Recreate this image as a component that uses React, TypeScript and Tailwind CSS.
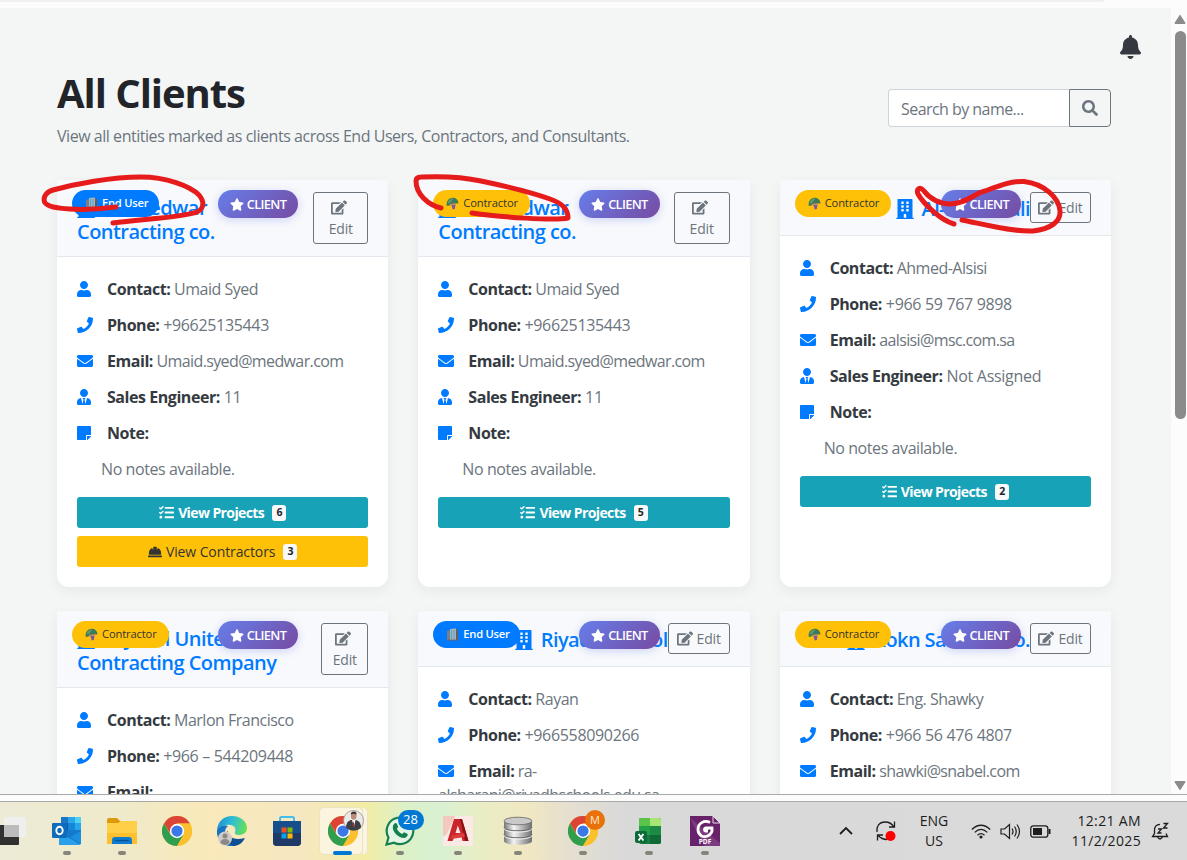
import React from "react";
import {
  FaBell,
  FaBuilding,
  FaEdit,
  FaEnvelope,
  FaHardHat,
  FaPhone,
  FaSearch,
  FaStar,
  FaStickyNote,
  FaTasks,
  FaUser,
  FaUserTie,
} from "react-icons/fa";

type Client = {
  kind: "End User" | "Contractor";
  lead: string;
  second?: string;
  editWidth: string;
  contact: string;
  phone: string;
  email: string;
  engineer: string;
  projects: number;
  contractors?: number;
};

const clients: Client[] = [
  { kind: "End User", lead: "Al- Medwar", second: "Contracting co.", editWidth: "w-[55px]", contact: "Umaid Syed", phone: "+96625135443", email: "Umaid.syed@medwar.com", engineer: "11", projects: 6, contractors: 3 },
  { kind: "Contractor", lead: "Al- Medwar", second: "Contracting co.", editWidth: "w-[56px]", contact: "Umaid Syed", phone: "+96625135443", email: "Umaid.syed@medwar.com", engineer: "11", projects: 5 },
  { kind: "Contractor", lead: "Al-Shamnali", editWidth: "w-[61px]", contact: "Ahmed-Alsisi", phone: "+966 59 767 9898", email: "aalsisi@msc.com.sa", engineer: "Not Assigned", projects: 2 },
  { kind: "Contractor", lead: "Al Jebel United", second: "Contracting Company", editWidth: "w-[47px]", contact: "Marlon Francisco", phone: "+966 – 544209448", email: "", engineer: "11", projects: 1 },
  { kind: "End User", lead: "Riyadh School", editWidth: "w-[62px]", contact: "Rayan", phone: "+966558090266", email: "ra-alsharani@riyadhschools.edu.sa", engineer: "11", projects: 1 },
  { kind: "Contractor", lead: "Rokn Sanabel Co.", editWidth: "w-[61px]", contact: "Eng. Shawky", phone: "+966 56 476 4807", email: "shawki@snabel.com", engineer: "11", projects: 1 },
];

function TowerGlyph() {
  return (
    <svg width="13" height="13" viewBox="0 0 13 13">
      <path d="M1 3l3-1v10H1z" fill="#7d7f86" />
      <path d="M4 1l6-.5V12H4z" fill="#a9b3bd" />
      <path d="M10 .5l2 1.500v10h-2z" fill="#6b5b57" />
      <path d="M5.500 2v9M8 2v9" stroke="#3fa9d8" strokeWidth="1" />
      <path d="M1 12h11" stroke="#77675f" strokeWidth="1" />
    </svg>
  );
}

function HelmetGlyph() {
  return (
    <svg width="13" height="13" viewBox="0 0 13 13">
      <path d="M5 5h5.500l-1 3.500-1 3.500H6.500L6 9.500 4.500 8z" fill="#c98a6a" />
      <path d="M5.500 8l1.300 4.500 2-.5.5-4z" fill="#7d5aa0" />
      <path d="M.8 9C0 4.500 2.500.8 6.500.8c3.400 0 5.700 2 6 5.600L9 6.200 5 6.800 3.500 8.500z" fill="#3f7a55" />
      <path d="M1.800 6C2.500 3 4.500 1.300 7.500 1.500L3.500 6.500z" fill="#5f9c70" />
    </svg>
  );
}

function KindBadge({ kind }: { kind: Client["kind"] }) {
  const endUser = kind === "End User";
  return (
    <span
      className={`absolute left-[15px] top-[10px] z-10 flex h-[27px] items-center gap-[4px] rounded-full pl-[13px] text-[11.2px] ${
        endUser ? "w-[87px] bg-[#007bff] font-semibold text-white tracking-[-0.25px]" : "w-[96.5px] bg-[#ffc107] font-medium text-[#333] tracking-[-0.15px]"
      }`}
    >
      {endUser ? <TowerGlyph /> : <HelmetGlyph />}
      <span>{kind}</span>
    </span>
  );
}

function InfoRow({ icon, label, value, tracking }: { icon: React.ReactNode; label: string; value: string; tracking: string }) {
  return (
    <p className={`mb-3 break-words text-[16px] leading-6 text-[#6c757d] ${tracking}`}>
      <span className="inline-block w-[30px] align-[-2px] tracking-normal text-[#007bff]">{icon}</span>
      <strong className="font-bold tracking-[-0.45px] text-[#343a40]">{label}:</strong> {value}
    </p>
  );
}

function ClientCard({ client }: { client: Client }) {
  const wrapped = Boolean(client.second);
  return (
    <article className="relative flex flex-col rounded-t-[4px] rounded-b-[12px] bg-white shadow-[0_4px_14px_rgba(0,0,0,0.06)]">
      <KindBadge kind={client.kind} />
      <span className="absolute right-[90px] top-[10px] z-10 flex h-[28px] w-[80.5px] items-center gap-[3px] rounded-full bg-[linear-gradient(135deg,#667eea,#764ba2)] pl-[12px] pt-[1px] text-[12.8px] font-semibold tracking-[-0.65px] text-white shadow-[0_2px_8px_rgba(102,126,234,0.3)]">
        <FaStar className="h-[13px] w-[14px]" />
        CLIENT
      </span>
      <header className="flex items-center justify-between rounded-t-[4px] border-b border-[#e3e8ee] bg-[#f8f9fc] px-5 py-3">
        <h5
          className={`flex-1 whitespace-nowrap text-[20px] font-semibold leading-6 text-[#007bff] ${
            wrapped ? "pt-[3px] tracking-[-0.54px]" : "pt-[2px] text-right tracking-[-0.6px]"
          }`}
        >
          <FaBuilding className="mr-[8px] inline-block h-[20px] w-[18px] align-[-3px]" />
          {client.lead}
          {wrapped && <span className="block">{client.second}</span>}
        </h5>
        <button
          className={`flex shrink-0 items-center justify-center rounded-[3px] border border-[#6c757d] text-[14px] leading-[21px] tracking-[-0.2px] text-[#6c757d] ${client.editWidth} ${
            wrapped ? "h-[52px] flex-col" : "h-[31px] gap-[4px]"
          }`}
        >
          <span className={wrapped ? "flex h-[21px] items-center pr-[3px]" : "flex"}>
            <FaEdit className="h-[15px] w-[16px]" />
          </span>
          <span>Edit</span>
        </button>
      </header>
      <div className="p-5">
        <InfoRow icon={<FaUser className="h-4 w-[14px]" />} label="Contact" value={client.contact} tracking="tracking-[-0.5px]" />
        <InfoRow icon={<FaPhone className="h-4 w-4" />} label="Phone" value={client.phone} tracking="tracking-[-0.33px]" />
        <InfoRow icon={<FaEnvelope className="h-4 w-4" />} label="Email" value={client.email} tracking="tracking-[-0.62px]" />
        <InfoRow icon={<FaUserTie className="h-4 w-[14px]" />} label="Sales Engineer" value={client.engineer} tracking="tracking-[-0.28px]" />
        <InfoRow icon={<FaStickyNote className="h-4 w-[14px]" />} label="Note" value="" tracking="tracking-normal" />
        <p className="mb-4 pl-6 text-[16px] leading-6 tracking-[-0.42px] text-[#6c757d]">No notes available.</p>
        <button className="flex h-[31px] w-full items-center justify-center rounded-[3px] bg-[#17a2b8] text-[14px] font-bold tracking-[-0.6px] text-white">
          <FaTasks className="mr-[4px] h-[15px] w-[15px]" />
          View Projects
          <span className="ml-[8px] flex h-[16px] w-[14px] items-center justify-center rounded-[3px] bg-[#f8f9fa] text-[10.5px] font-bold text-[#212529]">{client.projects}</span>
        </button>
        {client.contractors !== undefined && (
          <button className="mt-2 flex h-[31px] w-full items-center justify-center rounded-[3px] bg-[#ffc107] text-[14px] font-medium tracking-[-0.1px] text-[#333]">
            <FaHardHat className="mr-[4px] h-[14px] w-[14px]" />
            View Contractors
            <span className="ml-[8px] flex h-[16px] w-[14px] items-center justify-center rounded-[3px] bg-[#f8f9fa] text-[10.5px] font-bold text-[#212529]">{client.contractors}</span>
          </button>
        )}
      </div>
    </article>
  );
}

function Markup() {
  return (
    <svg className="pointer-events-none absolute left-0 top-0 z-20" width="1171" height="300" fill="none" stroke="#e61b1b" strokeWidth="5" strokeLinecap="round" strokeLinejoin="round">
      <path d="M116 207C101 209 85 210 70 209C57 208 47 207 44.500 202C43 197 46 192 53 190C75 184 111 177 141 177C166 177 190 186 199 195C204 201 205 208 197 212C184 217 145 219 113 223" />
      <path d="M441 208C428 205 416 194 416 181Q416 177 421 177C443 176 463 177 481 181C505 186 533 193 550 199C564 204 568 210 568 218C555 221 500 217 472 213" />
      <path d="M954 224C940 220 923 203 918 194C916 189 920 186 924 191C930 199 940 204 950 204C966 204 975 193 985 191C1001 185 1011 181 1024 181.500C1045 184 1059 198 1060 211C1061 222 1050 229 1033 231C1014 232 987 225 962 220" />
    </svg>
  );
}

function ChromeLogo() {
  return (
    <svg width="30" height="30" viewBox="0 0 48 48">
      <circle cx="24" cy="24" r="24" fill="#f9bb2d" />
      <path d="M3.200 12A24 24 0 0 1 44.800 12L24 12L14 29z" fill="#dc4437" />
      <path d="M3.200 12A24 24 0 0 0 24 48L34.400 30L24 24L13.600 30z" fill="#2f9e4f" />
      <path d="M24 12H44.800A24 24 0 0 1 24 48L35 29z" fill="#fbc02d" />
      <circle cx="24" cy="24" r="11.500" fill="#fff" />
      <circle cx="24" cy="24" r="9" fill="#3b78e7" />
    </svg>
  );
}

function OutlookLogo() {
  return (
    <svg width="30" height="30" viewBox="0 0 30 30">
      <path d="M9 1h20v13H9z" fill="#1976c5" />
      <path d="M16 1h7v6h-7z" fill="#28a8ea" />
      <path d="M23 1h6v6h-6z" fill="#50d0f5" />
      <path d="M9 7h7v7H9z" fill="#0b5aa5" />
      <path d="M16 7h7v7h-7z" fill="#1686d9" />
      <path d="M23 7h6v7h-6z" fill="#28a8ea" />
      <path d="M7 14h11l11 0v14H7z" fill="#1478cc" />
      <path d="M18 21l11-6v13z" fill="#1a8fe0" />
      <path d="M7 16l22 13H7z" fill="#2ba0ea" />
      <rect x="0" y="7" width="15" height="15" rx="1" fill="#0f6cbd" />
      <ellipse cx="7.500" cy="14.500" rx="3.200" ry="3.700" fill="none" stroke="#fff" strokeWidth="1.900" />
    </svg>
  );
}

function FolderLogo() {
  return (
    <svg width="30" height="30" viewBox="0 0 30 30">
      <path d="M0 4q0-2 2-2h8l3 3h15q2 0 2 2v6H0z" fill="#dc9a09" />
      <path d="M0 7h11l3-2h14q2 0 2 2v21H0z" fill="#ffcf48" />
      <path d="M0 17h30v11H0z" fill="#fbc02f" />
      <path d="M5 28v-4q0-3 3-3h14q3 0 3 3v4z" fill="#0f7bd0" />
      <path d="M8 24.500h14" stroke="#0a4f91" strokeWidth="1.300" />
    </svg>
  );
}

function EdgeLogo() {
  return (
    <svg width="30" height="30" viewBox="0 0 30 30">
      <defs>
        <linearGradient id="edgeTop" x1="0" x2="1" y1="0.300" y2="0.500">
          <stop offset="0" stopColor="#1b8fd6" />
          <stop offset=".5" stopColor="#2fc0d3" />
          <stop offset="1" stopColor="#69df55" />
        </linearGradient>
      </defs>
      <path d="M0 14c2-4 7-6 11-4-4 3-4 9 0 13 4 3 10 3 16 0-3 5-7 7-12 7C6 30-1 23 0 14z" fill="#1673c4" />
      <path d="M11 14c-1 7 6 11 17 8-3 6-8 8-12 8-6-2-8-10-5-16z" fill="#114f93" />
      <path d="M0 14C1 5 7 0 15 0c9 0 15 6 15 12 0 5-4 7-8 7-3 0-5-1-4-3 2-5-3-8-8-7C5 9 1 12 0 14z" fill="url(#edgeTop)" />
      <circle cx="8" cy="22.500" r="7" fill="#cfcbc7" />
      <circle cx="8" cy="20" r="2.500" fill="#8b8885" />
      <path d="M3.500 27q0-4 4.500-4t4.500 4q-4 4-9 0z" fill="#8b8885" />
    </svg>
  );
}

function StoreLogo() {
  return (
    <svg width="30" height="30" viewBox="0 0 30 30">
      <path d="M8 6V2.500Q8 1 9.500 1h11Q22 1 22 2.500V6" fill="none" stroke="#40bff0" strokeWidth="2" />
      <path d="M1 5h28v21q0 4-4 4H5q-4 0-4-4z" fill="#174f8c" />
      <path d="M1 17h28v9q0 4-4 4H5q-4 0-4-4z" fill="#203a68" />
      <path d="M9.500 11.500h5v5h-5z" fill="#f25022" />
      <path d="M15.500 11.500h5v5h-5z" fill="#7fba00" />
      <path d="M9.500 17.500h5v5h-5z" fill="#00a4ef" />
      <path d="M15.500 17.500h5v5h-5z" fill="#ffb900" />
    </svg>
  );
}

function WhatsAppLogo() {
  return (
    <svg width="30" height="30" viewBox="0 0 30 30">
      <path d="M1.500 28.500l2-7A13.300 13.300 0 1 1 9 26.700z" fill="#e4f5e3" stroke="#14804f" strokeWidth="2.200" />
      <path d="M9 8c1-1.500 2.500-1.300 3 0l1 2.500c.4 1-1.300 2-1 2.600 1 2.200 2.700 3.800 5 4.800.8.300 1.700-1.900 2.500-1.500l2.800 1.400c1.200.7-.2 4.200-3.400 4.200C13.500 22 7.600 16.200 7.800 11.300c0-1.200.4-2.300 1.200-3.300z" fill="#14804f" />
    </svg>
  );
}

function AutoCadLogo() {
  return (
    <svg width="30" height="30" viewBox="0 0 30 30">
      <path d="M0 0h30v30H0z" fill="#fae9e5" />
      <path d="M0 0h12L4 18l-4 3z" fill="#f3c8bd" />
      <path fillRule="evenodd" d="M11 3h8l6.500 22h-6l-1-4h-7L9.500 25h-5zM14.800 9.500L12.500 17h5z" fill="#c9252b" />
      <path d="M17 3h2l6.500 22h-3.500z" fill="#8d1218" />
      <path d="M9 19.500l12-2.500 1 4-14 2z" fill="#dd3c3c" />
    </svg>
  );
}

function DatabaseLogo() {
  return (
    <svg width="30" height="30" viewBox="0 0 30 30">
      <defs>
        <linearGradient id="steel">
          <stop offset="0" stopColor="#777" />
          <stop offset=".35" stopColor="#f4f4f4" />
          <stop offset=".65" stopColor="#b5b5b5" />
          <stop offset="1" stopColor="#6e6e6e" />
        </linearGradient>
      </defs>
      <path d="M1 5v20c0 5 28 5 28 0V5z" fill="url(#steel)" />
      <path d="M1 11c0 5 28 5 28 0M1 18c0 5 28 5 28 0" fill="none" stroke="#686868" strokeWidth="1" />
      <path d="M1 12.300c0 5 28 5 28 0M1 19.300c0 5 28 5 28 0" fill="none" stroke="#f2f2f2" strokeWidth="1" />
      <ellipse cx="15" cy="5" rx="14" ry="3.800" fill="#c9c9c9" stroke="#666" strokeWidth=".8" />
    </svg>
  );
}

function ExcelLogo() {
  return (
    <svg width="30" height="30" viewBox="0 0 30 30">
      <rect x="5" y="2" width="22" height="26" rx="2" fill="#167c41" />
      <path d="M7 2h9v8H5V4q0-2 2-2z" fill="#59c34b" />
      <path d="M16 2h9q2 0 2 2v6H16z" fill="#a7e673" />
      <path d="M5 10h11v9H5z" fill="#24a049" />
      <path d="M16 10h11v9H16z" fill="#1a8a45" />
      <path d="M16 19h11v7q0 2-2 2h-9z" fill="#0f6a36" />
      <rect x="1" y="15" width="12" height="12" rx="2" fill="#0d6b3b" />
      <path d="M4.600 18l4.800 6.500M9.400 18l-4.800 6.500" stroke="#fff" strokeWidth="1.900" />
    </svg>
  );
}

function FoxitLogo() {
  return (
    <span className="relative flex h-[30px] w-[30px] items-end justify-center">
      <svg className="absolute left-0 top-0" width="30" height="30" viewBox="0 0 30 30">
        <path d="M0 0h23l7 7v23H0z" fill="#672269" />
        <path d="M0 2l30 25v3H14z" fill="#7e3c80" />
        <path d="M23 0v7h7z" fill="#672269" stroke="#eadcea" strokeWidth="1" />
        <path d="M20 6.500C14 3.500 8 7.500 8 13.500c0 5.500 5 8.500 9.500 6.500 4-1.800 5-5 4.500-8l-6 0c-2 0-2 3 0 3h2" fill="none" stroke="#fff" strokeWidth="2.800" />
      </svg>
      <span className="relative text-[6.500px] font-bold leading-[9px] text-white">PDF</span>
    </span>
  );
}

function TaskItem({ width, mark = "dot", children }: { width: string; mark?: "dot" | "active" | "none"; children: React.ReactNode }) {
  return (
    <div className={`relative flex shrink-0 flex-col items-center pt-[14px] ${width}`}>
      {mark === "active" && (
        <>
          <span className="absolute left-[4px] top-[5px] h-[48px] w-[44px] rounded-[5px] border border-[#ece3c4] bg-[#fbf4df]" />
          <span className="absolute left-[48px] top-[5px] h-[48px] w-[5px] rounded-r-[5px] border border-l-0 border-[#ece3c4] bg-[#fbf4df]" />
        </>
      )}
      <div className="relative h-[30px]">{children}</div>
      {mark === "dot" && <span className="mt-[5px] h-[4px] w-[8px] rounded-full bg-[#85857a]" />}
      {mark === "active" && <span className="relative mt-[5px] h-[4px] w-[19px] rounded-full bg-[#0078d4]" />}
    </div>
  );
}

function Taskbar() {
  return (
    <footer className="flex h-[58px] shrink-0 bg-[linear-gradient(90deg,#edebd6_0px,#eeeacb_120px,#f9e9ba_200px,#f6e7c1_300px,#f3eda4_365px,#dcf1c8_405px,#d9f1d2_440px,#e9edc4_480px,#f1e8c2_525px,#e4dfd0_570px,#d9d9d9_625px,#dadada_1187px)]">
      <div className="w-[39.5px] shrink-0 pt-[14px]">
        <svg width="30" height="30" viewBox="0 0 30 30">
          <path d="M0 9h19v19q0 1-1 1H0z" fill="#303030" />
          <rect x="4" y="1" width="22" height="20" rx="1.500" fill="#efefef" opacity=".92" />
          <path d="M4 9h15v12H4z" fill="#bcbcbc" />
        </svg>
      </div>
      <TaskItem width="w-[55px]"><OutlookLogo /></TaskItem>
      <TaskItem width="w-[55px]"><FolderLogo /></TaskItem>
      <TaskItem width="w-[55px]" mark="none"><ChromeLogo /></TaskItem>
      <TaskItem width="w-[55px]" mark="none"><EdgeLogo /></TaskItem>
      <TaskItem width="w-[55px]" mark="none"><StoreLogo /></TaskItem>
      <TaskItem width="w-[55px]" mark="active">
        <span className="block pl-[1px]"><ChromeLogo /></span>
        <svg className="absolute left-[16px] top-[-6px]" width="21" height="21" viewBox="0 0 21 21">
          <circle cx="10.500" cy="10.500" r="10" fill="#eceae8" stroke="#8f8d89" strokeWidth=".8" />
          <path d="M3 18q0-7 5-8h5q5 1 5 8-7 5-15 0z" fill="#3c3e43" />
          <path d="M9 10h3.500l-1.500 7z" fill="#fff" />
          <path d="M10.500 11l1 4-1 3-1-3z" fill="#9b3434" />
          <ellipse cx="10.700" cy="6" rx="2.800" ry="3.700" fill="#b98d75" />
          <path d="M7.800 4.500q0-3 3-3t2.800 3q-3-1.500-5.800 0z" fill="#3b3432" />
        </svg>
      </TaskItem>
      <TaskItem width="w-[60px]">
        <WhatsAppLogo />
        <span className="absolute left-[13px] top-[-6px] flex h-[20px] w-[26px] items-center justify-center rounded-full bg-[#0078d4] text-[13px] text-white">28</span>
      </TaskItem>
      <TaskItem width="w-[56px]"><AutoCadLogo /></TaskItem>
      <TaskItem width="w-[64px]"><DatabaseLogo /></TaskItem>
      <TaskItem width="w-[67px]">
        <ChromeLogo />
        <span className="absolute left-[17px] top-[-6px] flex h-[20px] w-[20px] items-center justify-center rounded-full bg-[#e8710a] text-[11px] text-[#ffe8d2]">M</span>
      </TaskItem>
      <TaskItem width="w-[65px]"><ExcelLogo /></TaskItem>
      <TaskItem width="w-[47px]"><FoxitLogo /></TaskItem>
      <div className="ml-auto flex items-center pr-[18px] text-[#1d1d1d]">
        <svg className="mr-[22px]" width="14" height="10" viewBox="0 0 14 10" fill="none" stroke="currentColor" strokeWidth="1.800">
          <path d="M1 8l6-6 6 6" />
        </svg>
        <svg className="mr-[21px]" width="22" height="22" viewBox="0 0 22 22" fill="none" stroke="currentColor" strokeWidth="1.300">
          <path d="M2 12C1 7 4 2 10 2q6 0 9 5M19.500 1.500V7H14M12 19.500q-5 0-9-4M2.500 20.500V15H8" />
          <circle cx="15.500" cy="16" r="5" fill="#fe0000" stroke="none" />
        </svg>
        <div className="mr-[21px] w-[32px] text-center text-[14px] leading-[20px]">
          ENG
          <br />
          US
        </div>
        <svg className="mr-[9px]" width="20" height="15" viewBox="0 0 20 15" fill="none" stroke="currentColor" strokeWidth="1.300">
          <path d="M.8 5.500Q10-3 19.200 5.500M3.700 8.400q6.300-6 12.600 0M6.500 11.200q3.500-3.200 7 0" />
          <circle cx="10" cy="13" r="1.600" fill="currentColor" stroke="none" />
        </svg>
        <svg className="mr-[9px]" width="21" height="17" viewBox="0 0 21 17" fill="none" stroke="currentColor" strokeWidth="1.200">
          <path d="M1 6h3.500L9.500 1.500v14L4.500 11H1zM12 5.500q2 3 0 6M14.500 3.500q3.500 5 0 10M17 1.500q5 7 0 14" />
        </svg>
        <svg className="mr-[20px]" width="21" height="13" viewBox="0 0 21 13" fill="none" stroke="currentColor" strokeWidth="1.300">
          <rect x=".8" y=".8" width="17" height="11.400" rx="2.500" />
          <rect x="3" y="3" width="9" height="7" fill="currentColor" stroke="none" />
          <path d="M19.500 4v5" strokeWidth="2" />
        </svg>
        <div className="mr-[10px] w-[70px] whitespace-nowrap text-right text-[14px] leading-[20px] tracking-[0.35px]">
          12:21 AM
          <br />
          11/2/2025
        </div>
        <svg width="18" height="19" viewBox="0 0 18 19" fill="none" stroke="currentColor" strokeWidth="1.300">
          <path d="M9 2.300Q3.500 2.500 3.500 8v3.500L1.500 14.500h15l-1.500-3M6.500 15q2.500 4 5 0" />
          <path d="M7 7h3.500L7 11h3.500M12.500 1.500h4l-4 4.500h4" strokeWidth="1.300" />
        </svg>
      </div>
    </footer>
  );
}

export default function App() {
  return (
    <div className="relative flex h-[860px] w-[1187px] flex-col overflow-hidden bg-[#fcfcfc] font-['Open_Sans','Noto_Sans',sans-serif]">
      <div className="h-[8px] shrink-0">
        <div className="h-[2px] w-[1104px] rounded-br-[3px] bg-[#f0f0f0]" />
      </div>
      <div className="flex h-[786px] shrink-0">
        <main className="h-[786px] w-[1171px] shrink-0 overflow-hidden bg-[#f4f6f6]">
          <div className="flex justify-end pr-[30px] pt-[27px]">
            <FaBell className="h-[24px] w-[21px] text-[#343a40]" />
          </div>
          <div className="flex h-[121px] justify-between pl-[57px] pr-[60px]">
            <div className="pt-[10px]">
              <h1 className="text-[40px] font-bold leading-[48px] tracking-[-1.05px] text-[#212529]">All Clients</h1>
              <p className="mt-[7px] text-[16px] leading-6 tracking-[-0.46px] text-[#6c757d]">
                View all entities marked as clients across End Users, Contractors, and Consultants.
              </p>
            </div>
            <div className="mt-[30px] flex h-[38px]">
              <div className="flex w-[181px] items-center rounded-l-[4px] border border-r-0 border-[#ced4da] bg-white pl-3 pt-[2px] text-[16px] tracking-[-0.55px] text-[#6c757d]">
                Search by name...
              </div>
              <button className="flex w-[42px] items-center justify-center rounded-r-[4px] border border-[#6c757d] text-[#6c757d]">
                <FaSearch className="h-4 w-4" />
              </button>
            </div>
          </div>
          <div className="grid grid-cols-3 gap-x-[30px] gap-y-6 pl-[57px] pr-[60px]">
            {clients.map((client, i) => (
              <ClientCard key={i} client={client} />
            ))}
          </div>
        </main>
        <div className="flex w-[16px] flex-col items-center pl-[2px] pt-[6px]">
          <svg width="12" height="10" viewBox="0 0 12 10">
            <path d="M6 .5L11.500 9Q11.500 10 10.500 10H1.500Q.5 10 .5 9z" fill="#8b8b8b" />
          </svg>
          <div className="mt-[7px] h-[388px] w-[11px] rounded-full bg-[#8b8b8b]" />
          <svg className="mb-[3px] mt-auto" width="12" height="10" viewBox="0 0 12 10">
            <path d="M6 9.500L.5 1Q.5 0 1.500 0h9Q11.500 0 11.500 1z" fill="#8b8b8b" />
          </svg>
        </div>
      </div>
      <div className="h-[8px] shrink-0 border-y border-[#a8aaa9] bg-[#fcfcfc]" />
      <Taskbar />
      <Markup />
    </div>
  );
}
